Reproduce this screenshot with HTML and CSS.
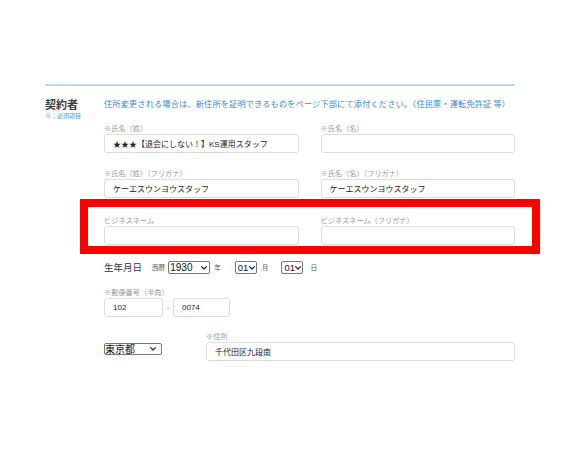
FILE: index.html
```html
<!DOCTYPE html>
<html lang="ja">
<head>
<meta charset="utf-8">
<title>契約者</title>
<link rel="stylesheet" href="styles.css">
</head>
<body>
<div class="page">
  <div class="divider"></div>
  <section class="contract">
    <div class="side">
      <h2 class="title">契約者</h2>
      <p class="req">※：必須項目</p>
    </div>
    <div class="main">
      <p class="notice">住所変更される場合は、新住所を証明できるものをページ下部にて添付ください。（住民票・運転免許証 等）</p>

      <div class="pair row1">
        <div class="field">
          <label class="lbl">※氏名（姓）</label>
          <input class="txt" type="text" value="★★★【退会にしない！】KS運用スタッフ">
        </div>
        <div class="field">
          <label class="lbl">※氏名（名）</label>
          <input class="txt" type="text" value="">
        </div>
      </div>

      <div class="pair row2">
        <div class="field">
          <label class="lbl">※氏名（姓）（フリガナ）</label>
          <input class="txt" type="text" value="ケーエスウンヨウスタッフ">
        </div>
        <div class="field">
          <label class="lbl">※氏名（名）（フリガナ）</label>
          <input class="txt" type="text" value="ケーエスウンヨウスタッフ">
        </div>
      </div>

      <div class="pair row3 highlight">
        <div class="field">
          <label class="lbl">ビジネスネーム</label>
          <input class="txt" type="text" value="">
        </div>
        <div class="field">
          <label class="lbl">ビジネスネーム（フリガナ）</label>
          <input class="txt" type="text" value="">
        </div>
      </div>

      <div class="birth">
        <span class="birth-title">生年月日</span>
        <span class="unit era">西暦</span>
        <span class="selwrap">
          <select class="sel year"><option>1930</option></select>
          <svg class="chev" viewBox="0 0 6 4" width="6" height="4"><polyline points="0.6,0.6 3,3 5.4,0.6"/></svg>
        </span>
        <span class="unit u-year">年</span>
        <span class="selwrap">
          <select class="sel small"><option>01</option></select>
          <svg class="chev" viewBox="0 0 6 4" width="6" height="4"><polyline points="0.6,0.6 3,3 5.4,0.6"/></svg>
        </span>
        <span class="unit u-month">月</span>
        <span class="selwrap">
          <select class="sel small"><option>01</option></select>
          <svg class="chev" viewBox="0 0 6 4" width="6" height="4"><polyline points="0.6,0.6 3,3 5.4,0.6"/></svg>
        </span>
        <span class="unit u-day">日</span>
      </div>

      <div class="postal">
        <label class="lbl">※郵便番号（半角）</label>
        <div class="postal-inputs">
          <input class="txt zip1" type="text" value="102">
          <span class="dash">-</span>
          <input class="txt zip2" type="text" value="0074">
        </div>
      </div>

      <div class="address">
        <div class="pref-col">
          <span class="selwrap">
            <select class="sel pref"><option>東京都</option></select>
            <svg class="chev" viewBox="0 0 6 4" width="6" height="4"><polyline points="0.6,0.6 3,3 5.4,0.6"/></svg>
          </span>
        </div>
        <div class="field addr-col">
          <label class="lbl">※住所</label>
          <input class="txt" type="text" value="千代田区九段南">
        </div>
      </div>
    </div>
  </section>
</div>
</body>
</html>
```

FILE: styles.css
```css
html, body {
  margin: 0;
  padding: 0;
  background: #ffffff;
}

body {
  font-family: "Liberation Sans", "Noto Sans CJK JP", sans-serif;
  color: #333333;
}

.page {
  width: 470px;
  margin-left: 45px;
  padding-top: 84px;
}

.divider {
  height: 2px;
  background: #b7dcf1;
}

.contract {
  display: flex;
  margin-top: 11px;
}

.side {
  width: 59px;
  flex: none;
}

.title {
  margin: 0;
  font-size: 11px;
  line-height: 14px;
  font-weight: 600;
  color: #3a3a3a;
  font-family: "Noto Sans CJK JP", sans-serif;
}

.req {
  margin: 1px 0 0;
  font-size: 6px;
  line-height: 7px;
  color: #3f95d2;
  font-family: "Noto Sans CJK JP", sans-serif;
  white-space: nowrap;
}

.main {
  flex: 1;
  min-width: 0;
}

.notice {
  margin: 0;
  font-size: 8.2px;
  line-height: 12px;
  letter-spacing: 0.15px;
  color: #3b8bc6;
  font-family: "Noto Sans CJK JP", sans-serif;
  white-space: nowrap;
}

.pair {
  display: grid;
  grid-template-columns: 1fr 1fr;
  column-gap: 22px;
}

.row1 { margin-top: 14px; }
.row2 { margin-top: 15px; }
.row3 { margin-top: 17px; }

.field {
  display: flex;
  flex-direction: column;
}

.lbl {
  display: block;
  font-size: 7.2px;
  line-height: 11px;
  color: #999999;
  font-family: "Noto Sans CJK JP", sans-serif;
  white-space: nowrap;
}

.txt {
  box-sizing: border-box;
  width: 100%;
  height: 19px;
  margin: 0;
  padding: 0 8px;
  border: 1px solid #dcdcdc;
  border-radius: 3px;
  background: #ffffff;
  font-family: "Liberation Sans", "Noto Sans CJK JP", sans-serif;
  font-size: 8px;
  color: #222222;
  outline: none;
}

.highlight {
  position: relative;
}

.highlight::before {
  content: "";
  position: absolute;
  left: -24px;
  right: -25px;
  top: -16px;
  bottom: -9px;
  border: 8px solid #ff0000;
  box-sizing: border-box;
  pointer-events: none;
}

.birth {
  display: flex;
  align-items: center;
  height: 14px;
  margin-top: 15px;
}

.birth-title {
  font-size: 9.5px;
  color: #333333;
  font-family: "Noto Sans CJK JP", sans-serif;
  margin-right: 10px;
}

.unit {
  font-size: 6.6px;
  color: #555555;
  font-family: "Noto Sans CJK JP", sans-serif;
}

.era { margin-right: 3px; }
.u-year { margin: 0 14px 0 4px; }
.u-month { margin: 0 13px 0 5px; }
.u-day { margin-left: 7px; }

.selwrap {
  position: relative;
  display: inline-flex;
}

.sel {
  -webkit-appearance: none;
  appearance: none;
  box-sizing: border-box;
  height: 13px;
  margin: 0;
  padding: 0 9px 0 1px;
  border: 1px solid #767676;
  border-radius: 2px;
  background: #ffffff;
  font-family: "Liberation Sans", "Noto Sans CJK JP", sans-serif;
  font-size: 10px;
  line-height: 11px;
  color: #111111;
  outline: none;
}

.chev {
  position: absolute;
  right: 3px;
  top: 5px;
  pointer-events: none;
  fill: none;
  stroke: #222222;
  stroke-width: 1.2;
  stroke-linecap: round;
  stroke-linejoin: round;
}

.year { width: 42px; }

.small {
  width: 22px;
  padding: 0 6px 0 2px;
  font-size: 9.5px;
}

.small + .chev {
  right: 2px;
}

.postal {
  margin-top: 13px;
}

.postal-inputs {
  display: flex;
  align-items: center;
}

.zip1 { width: 59px; }
.zip2 { width: 57px; }

.dash {
  width: 10px;
  text-align: center;
  font-size: 8px;
  color: #888888;
}

.address {
  display: flex;
  align-items: flex-end;
  margin-top: 14px;
}

.pref-col {
  width: 102px;
  flex: none;
  padding-bottom: 4px;
}

.pref {
  width: 58px;
  height: 12px;
  padding-left: 0;
  font-size: 10px;
  line-height: 10px;
  font-family: "Noto Sans CJK JP", sans-serif;
}

.pref + .chev {
  top: 4px;
  right: 6px;
}

.addr-col {
  flex: 1;
}
```
